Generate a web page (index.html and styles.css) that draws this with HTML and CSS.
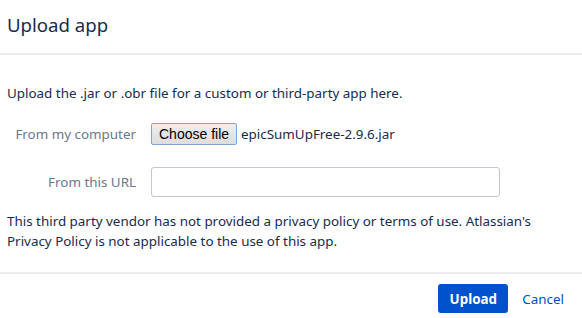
FILE: index.html
```html
<!DOCTYPE html>
<html lang="en">
<head>
  <meta charset="UTF-8">
  <meta name="viewport" content="width=device-width, initial-scale=1.0">
  <title>Upload app</title>
  <link rel="stylesheet" href="styles.css">
</head>
<body>
  <div class="dialog">
    <!-- Header -->
    <div class="dialog-header">
      <h2>Upload app</h2>
    </div>

    <!-- Content -->
    <div class="dialog-content">
      <p class="intro">Upload the .jar or .obr file for a custom or third-party app here.</p>
      <div class="field-group">
        <label for="upload-file">From my computer</label>
        <div class="file-field">
          <button type="button" id="upload-file" class="file-button">Choose file</button>
          <span class="file-name">epicSumUpFree-2.9.6.jar</span>
        </div>
      </div>
      <div class="field-group url-group">
        <label for="upload-url">From this URL</label>
        <input type="text" id="upload-url" class="text-input">
      </div>
      <p class="privacy">This third party vendor has not provided a privacy policy or terms of use. Atlassian's Privacy Policy is not applicable to the use of this app.</p>
    </div>

    <!-- Footer -->
    <div class="dialog-footer">
      <button type="button" class="primary-button">Upload</button>
      <a href="#" class="cancel-link">Cancel</a>
    </div>
  </div>
</body>
</html>
```

FILE: styles.css
```css
body {
  margin: 0;
  font-family: "Noto Sans", sans-serif;
  font-size: 13.4px;
  line-height: 20px;
  color: #172b4d;
  background: #fff;
}
.dialog {
  width: 582px;
}
.dialog-header {
  height: 53px;
  padding: 0 7px;
  border-bottom: 2px solid #ebecf0;
  display: flex;
  align-items: center;
}
.dialog-header h2 {
  margin: 0 0 3px;
  font-size: 18.6px;
  font-weight: 400;
  line-height: 24px;
}
.dialog-content {
  padding: 28px 7px 0;
}
.intro {
  margin: 0 0 20px;
}
.field-group {
  display: flex;
  align-items: center;
  margin-bottom: 22px;
}
.field-group label {
  width: 129px;
  padding-right: 15px;
  text-align: right;
  color: #6b778c;
}
.file-field {
  display: flex;
  align-items: center;
  gap: 4px;
}
.file-button {
  font-family: "Liberation Sans", Arial, sans-serif;
  font-size: 14px;
  color: #000;
  height: 22px;
  padding: 0 7px;
  border: 1px solid #7ea6d6;
  border-radius: 2px;
  background: linear-gradient(#eeeeee, #dddddd);
}
.text-input {
  width: 349px;
  height: 30px;
  box-sizing: border-box;
  border: 1px solid #c1c7d0;
  border-radius: 3px;
  padding: 4px 6px;
  font: inherit;
}
.url-group {
  margin-bottom: 14px;
}
.privacy {
  margin: 0;
  padding-bottom: 21px;
}
.dialog-footer {
  border-top: 2px solid #ebecf0;
  display: flex;
  justify-content: flex-end;
  align-items: center;
  gap: 14px;
  padding: 10px 18px 0 0;
}
.primary-button {
  font: inherit;
  font-weight: 700;
  color: #fff;
  background: #0052cc;
  border: none;
  border-radius: 3px;
  height: 29px;
  width: 70px;
}
.cancel-link {
  color: #0052cc;
  text-decoration: none;
}
```
